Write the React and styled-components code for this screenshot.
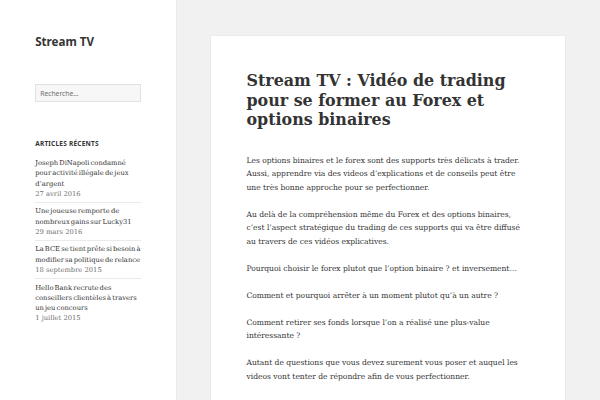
import styled, { createGlobalStyle } from "styled-components";

const GlobalStyle = createGlobalStyle`
  html, body {
    margin: 0;
    padding: 0;
    background: #f1f1f1;
  }
  body {
    font-family: "DejaVu Serif", serif;
    color: #333;
  }
`;

const recentPosts = [
  {
    title: "Joseph DiNapoli condamné pour activité illégale de jeux d’argent",
    date: "27 avril 2016",
  },
  { title: "Une joueuse remporte de nombreux gains sur Lucky31", date: "29 mars 2016" },
  {
    title: "La BCE se tient prête si besoin à modifier sa politique de relance",
    date: "18 septembre 2015",
  },
  {
    title: "Hello Bank recrute des conseillers clientèles à travers un jeu concours",
    date: "1 juillet 2015",
  },
];

const paragraphs = [
  "Les options binaires et le forex sont des supports très délicats à trader. Aussi, apprendre via des videos d’explications et de conseils peut être une très bonne approche pour se perfectionner.",
  "Au delà de la compréhension même du Forex et des options binaires, c’est l’aspect stratégique du trading de ces supports qui va être diffusé au travers de ces vidéos explicatives.",
  "Pourquoi choisir le forex plutot que l’option binaire ? et inversement…",
  "Comment et pourquoi arrêter à un moment plutot qu’à un autre ?",
  "Comment retirer ses fonds lorsque l’on a réalisé une plus-value intéressante ?",
  "Autant de questions que vous devez surement vous poser et auquel les videos vont tenter de répondre afin de vous perfectionner.",
];

export default function App() {
  return (
    <>
      <GlobalStyle />
      <Page>
        <Sidebar>
          <SiteTitle>Stream TV</SiteTitle>
          <Widget>
            <SearchField type="search" placeholder="Recherche…" />
          </Widget>
          <Widget>
            <WidgetTitle>Articles récents</WidgetTitle>
            <PostList>
              {recentPosts.map((post) => (
                <PostItem key={post.title}>
                  <PostLink href="#">{post.title}</PostLink>
                  <PostDate>{post.date}</PostDate>
                </PostItem>
              ))}
            </PostList>
          </Widget>
        </Sidebar>
        <Content>
          <Card>
            <EntryTitle>Stream TV : Vidéo de trading pour se former au Forex et options binaires</EntryTitle>
            <EntryContent>
              {paragraphs.map((text) => (
                <p key={text}>{text}</p>
              ))}
            </EntryContent>
          </Card>
        </Content>
      </Page>
    </>
  );
}

const Page = styled.div`
  display: flex;
  width: 600px;
  height: 400px;
  overflow: hidden;
`;

const Sidebar = styled.aside`
  width: 176px;
  flex-shrink: 0;
  box-sizing: border-box;
  padding: 0 35.2px;
  background: #fff;
  box-shadow: 0 0 1px rgba(0, 0, 0, 0.15);
`;

const SiteTitle = styled.h1`
  margin: 35.2px 0;
  font-family: "Noto Sans", sans-serif;
  font-weight: 700;
  font-size: 11.6px;
  line-height: 14px;
  color: #333;
`;

const Widget = styled.section`
  margin-bottom: 35.2px;
`;

const SearchField = styled.input`
  display: block;
  width: 100%;
  height: 18px;
  box-sizing: border-box;
  margin: 0;
  padding: 0 4px;
  border: 1px solid rgba(51, 51, 51, 0.1);
  border-radius: 0;
  background: #f7f7f7;
  font-family: "Noto Sans", sans-serif;
  font-size: 6.75px;
  color: #333;
  outline: none;

  &::placeholder {
    color: #707070;
  }
`;

const WidgetTitle = styled.h2`
  margin: 0 0 9.2px;
  font-family: "Noto Sans", sans-serif;
  font-weight: 700;
  font-size: 6.45px;
  line-height: 11.25px;
  letter-spacing: 0.04em;
  text-transform: uppercase;
  color: #333;
`;

const PostList = styled.ul`
  margin: 0;
  padding: 0;
  list-style: none;
`;

const PostItem = styled.li`
  padding: 3.1px 0;
  border-top: 1px solid rgba(51, 51, 51, 0.1);
  font-size: 6.75px;
  line-height: 10.3px;

  &:first-child {
    border-top: 0;
    padding-top: 0;
  }
`;

const PostLink = styled.a`
  color: #333;
  text-decoration: none;
  word-spacing: -1px;
`;

const PostDate = styled.span`
  display: block;
  color: #707070;
`;

const Content = styled.main`
  flex: 1;
  min-width: 0;
`;

const Card = styled.article`
  margin: 35.5px 35.3px 0;
  padding-top: 35.3px;
  min-height: 400px;
  background: #fff;
  box-shadow: 0 0 1px rgba(0, 0, 0, 0.15);
`;

const EntryTitle = styled.h1`
  margin: 0 0 23.7px;
  padding: 0 35.2px;
  font-family: "DejaVu Serif", serif;
  font-weight: 700;
  font-size: 15.9px;
  line-height: 19.7px;
  color: #333;
`;

const EntryContent = styled.div`
  padding: 0 35.2px;
  font-size: 7.55px;
  line-height: 13.5px;
  color: #333;

  p {
    margin: 0 0 13.5px;
  }
`;
